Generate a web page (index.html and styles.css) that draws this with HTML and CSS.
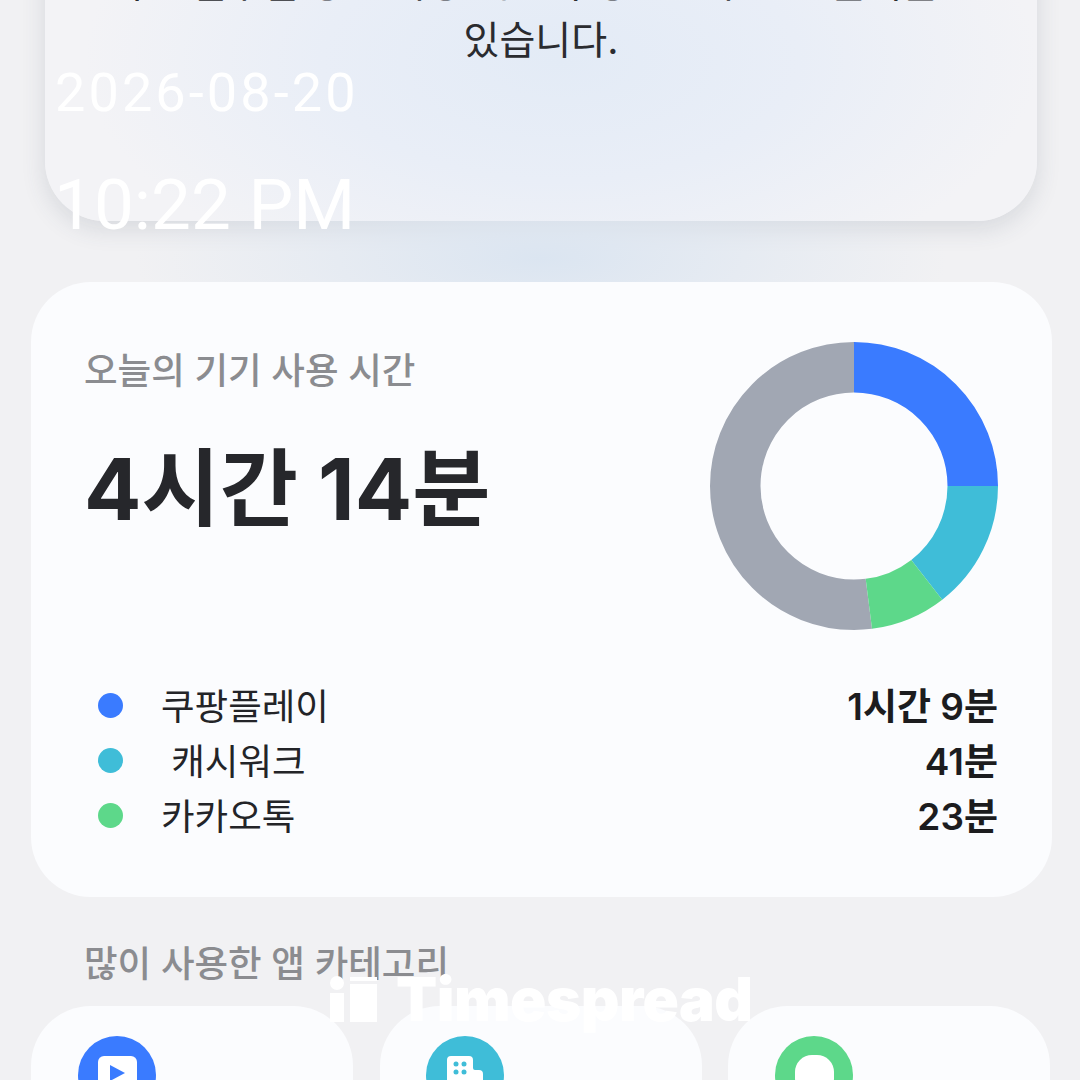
FILE: index.html
```html
<!DOCTYPE html>
<html lang="ko">
  <head>
    <title>Timespread</title>
    <link rel="stylesheet" href="styles.css">
  </head>
  <body>
    <div class="screen">
      <!-- Notice card, scrolled mostly out of view -->
      <div class="hero">
        <p class="hero-text">최근 일주일 동안 사용 시간이 평균보다 조금 줄어들고<br>있습니다.</p>
      </div>

      <!-- Today's usage -->
      <div class="usage-card">
        <div class="usage-top">
          <div class="usage-summary">
            <div class="section-title">오늘의 기기 사용 시간</div>
            <div class="usage-total">4시간 14분</div>
          </div>
          <svg class="donut" viewBox="0 0 288 288">
            <circle class="seg seg-gray" cx="144" cy="144" r="118.75" pathLength="360" stroke-dasharray="187.2 360" stroke-dashoffset="-172.8"></circle>
            <circle class="seg seg-blue" cx="144" cy="144" r="118.75" pathLength="360" stroke-dasharray="90 360"></circle>
            <circle class="seg seg-teal" cx="144" cy="144" r="118.75" pathLength="360" stroke-dasharray="52.2 360" stroke-dashoffset="-90"></circle>
            <circle class="seg seg-green" cx="144" cy="144" r="118.75" pathLength="360" stroke-dasharray="30.6 360" stroke-dashoffset="-142.2"></circle>
          </svg>
        </div>
        <ul class="legend">
          <li class="legend-row">
            <span class="dot dot-blue"></span>
            <span class="legend-name">쿠팡플레이</span>
            <span class="legend-value">1시간 9분</span>
          </li>
          <li class="legend-row">
            <span class="dot dot-teal"></span>
            <span class="legend-name">&nbsp;캐시워크</span>
            <span class="legend-value">41분</span>
          </li>
          <li class="legend-row">
            <span class="dot dot-green"></span>
            <span class="legend-name">카카오톡</span>
            <span class="legend-value">23분</span>
          </li>
        </ul>
      </div>

      <!-- Categories -->
      <div class="section-title category-title">많이 사용한 앱 카테고리</div>
      <div class="category-grid">
        <div class="category-card">
          <span class="category-icon dot-blue">
            <svg viewBox="0 0 78 78">
              <rect x="20" y="20" width="39" height="38" rx="6" fill="#fff"></rect>
              <path d="M32 29 L47 37 L32 45 Z" fill="#3a7bff"></path>
            </svg>
          </span>
        </div>
        <div class="category-card">
          <span class="category-icon dot-teal">
            <svg viewBox="0 0 78 78">
              <path d="M25 20 H43 Q47 20 47 24 V32 Q47 34 49 34 H53 Q57 34 57 38 V58 H21 V24 Q21 20 25 20 Z" fill="#fff"></path>
              <g fill="#3fbdd8">
                <circle cx="30" cy="28" r="2.5"></circle>
                <circle cx="38" cy="28" r="2.5"></circle>
                <circle cx="30" cy="36" r="2.5"></circle>
                <circle cx="38" cy="36" r="2.5"></circle>
              </g>
            </svg>
          </span>
        </div>
        <div class="category-card">
          <span class="category-icon dot-green">
            <svg viewBox="0 0 78 78">
              <rect x="20" y="19" width="39" height="40" rx="17" fill="#fff"></rect>
            </svg>
          </span>
        </div>
      </div>

      <!-- Camera watermark on top of the capture -->
      <div class="stamp-date">2026-08-20</div>
      <div class="stamp-time">10:22 PM</div>
      <div class="stamp-logo">
        <svg class="stamp-mark" viewBox="0 0 48 46">
          <circle cx="7" cy="7" r="7" fill="#fff"></circle>
          <rect x="0" y="17" width="14" height="29" fill="#fff"></rect>
          <rect x="20" y="1" width="27" height="4" fill="#fff"></rect>
          <rect x="20" y="8" width="27" height="38" fill="#fff"></rect>
        </svg>
        <span class="stamp-name">Timespread</span>
      </div>
    </div>
  </body>
</html>
```

FILE: styles.css
```css
:root {
  --blue: #3a7bff;
  --teal: #3fbdd8;
  --green: #5dd88a;
  --gray: #a1a7b3;
  --card-bg: #fbfcfe;
}

* {
  margin: 0;
  padding: 0;
  box-sizing: border-box;
}

body {
  height: 100vh;
  overflow: hidden;
  background: #f1f1f3;
  font-family: Inter, "Noto Sans CJK KR", sans-serif;
}

.screen {
  position: relative;
  height: 1080px;
  overflow: hidden;
  padding: 0 28px 0 31px;
}

/* Notice card */
.hero {
  position: relative;
  height: 321px;
  margin: -100px 15px 0 14px;
  padding-top: 54px;
  border-radius: 60px;
  background: radial-gradient(ellipse 48% 75% at 52% 50%, #e3ebf6 0%, #e9eef7 50%, #f3f3f6 100%);
  box-shadow: 0 8px 24px rgba(60, 70, 90, 0.14);
  text-align: center;
}

.hero::after {
  content: "";
  position: absolute;
  left: 90px;
  right: 90px;
  top: 100%;
  height: 62px;
  background: radial-gradient(ellipse 50% 200% at 50% 60%, #dbe5f1 0%, rgba(221, 231, 242, 0) 100%);
}

.hero-text {
  font-size: 39px;
  line-height: 57px;
  color: #2a2b2f;
  white-space: nowrap;
}

/* Usage card */
.usage-card {
  position: relative;
  margin-top: 61px;
  height: 615px;
  padding: 60px 54px 0 53px;
  border-radius: 60px;
  background: var(--card-bg);
}

.usage-top {
  display: flex;
  justify-content: space-between;
}

.usage-summary {
  padding-top: 9px;
}

.section-title {
  font-size: 36.5px;
  line-height: 40px;
  font-weight: 500;
  color: #8b8c90;
}

.usage-total {
  margin-top: 49px;
  font-size: 85px;
  line-height: 100px;
  font-weight: 700;
  color: #26272b;
}

.donut {
  width: 288px;
  height: 288px;
  transform: rotate(-90deg);
}

.seg {
  fill: none;
  stroke-width: 50.5;
}

.seg-blue { stroke: var(--blue); }
.seg-teal { stroke: var(--teal); }
.seg-green { stroke: var(--green); }
.seg-gray { stroke: var(--gray); }

.legend {
  list-style: none;
  margin-top: 48px;
  padding-left: 14px;
}

.legend-row {
  display: flex;
  align-items: center;
  height: 55px;
  gap: 38px;
}

.dot {
  width: 25px;
  height: 25px;
  border-radius: 50%;
}

.dot-blue { background: var(--blue); }
.dot-teal { background: var(--teal); }
.dot-green { background: var(--green); }

.legend-name {
  flex: 1;
  margin-bottom: 2px;
  font-size: 36.5px;
  font-weight: 400;
  color: #232428;
}

.legend-value {
  margin-bottom: 3px;
  font-size: 37px;
  font-weight: 600;
  color: #1c1c1e;
}

/* Categories */
.category-title {
  margin: 47px 0 0 53px;
}

.category-grid {
  display: grid;
  grid-template-columns: repeat(3, 322px);
  gap: 26.6px;
  margin-top: 22px;
}

.category-card {
  height: 220px;
  padding: 30px 46.7px;
  border-radius: 60px;
  background: var(--card-bg);
}

.category-icon {
  display: block;
  width: 78px;
  height: 78px;
  border-radius: 50%;
}

.category-icon svg {
  display: block;
  width: 78px;
  height: 78px;
}

/* Watermark */
.stamp-date,
.stamp-time {
  position: absolute;
  font-family: Roboto, sans-serif;
  font-weight: 400;
  color: #fff;
  white-space: nowrap;
}

.stamp-date {
  left: 55px;
  top: 60px;
  font-size: 54px;
  line-height: 66px;
  letter-spacing: 3.1px;
}

.stamp-time {
  left: 54px;
  top: 162px;
  font-size: 71px;
  line-height: 86px;
}

.stamp-logo {
  position: absolute;
  left: 330px;
  top: 976px;
  display: flex;
  align-items: center;
  gap: 18px;
}

.stamp-mark {
  width: 48px;
  height: 46px;
}

.stamp-name {
  font-size: 60px;
  line-height: 46px;
  font-weight: 900;
  letter-spacing: -0.5px;
  color: #fff;
}
```
